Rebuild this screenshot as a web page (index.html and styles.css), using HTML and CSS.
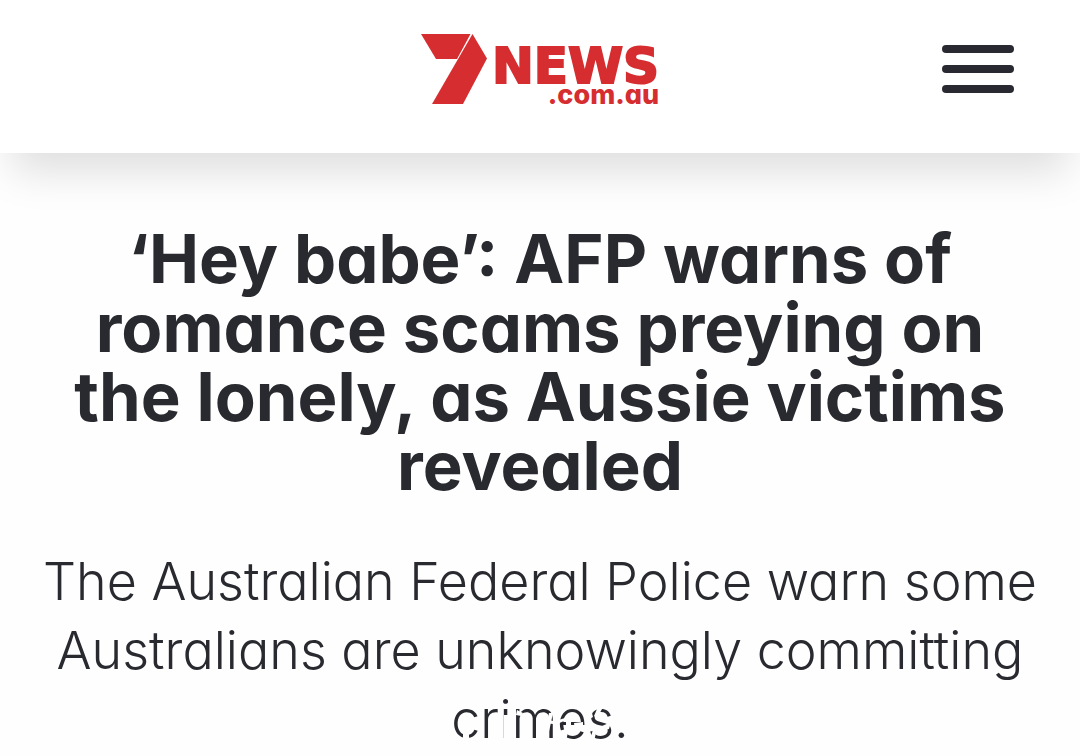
FILE: index.html
```html
<!DOCTYPE html>
<html lang="en-AU">
<head>
<meta charset="utf-8">
<meta name="viewport" content="width=device-width, initial-scale=1">
<title>7NEWS.com.au</title>
<link rel="stylesheet" href="styles.css">
</head>
<body>
<header class="site-header">
  <a class="brand" href="#" aria-label="7NEWS.com.au home">
    <svg class="brand-mark" viewBox="0 0 67 71" aria-hidden="true">
      <path d="M0 0H49.500L36 25H15Z"/>
      <path d="M51.500 0L66 24.500L42 70H11Z"/>
    </svg>
    <span class="brand-text">
      <span class="brand-name">NEWS</span>
      <span class="brand-domain">.com.au</span>
    </span>
  </a>
  <button class="menu-button" type="button" aria-label="Open menu">
    <span class="menu-bar"></span>
    <span class="menu-bar"></span>
    <span class="menu-bar"></span>
  </button>
</header>
<main class="article">
  <h1 class="headline">‘Hey babe’: AFP warns of romance scams preying on the lonely, as Aussie victims revealed</h1>
  <p class="deck">The Australian Federal Police warn some Australians are unknowingly committing <span class="last-word">crimes.<svg class="cutouts" viewBox="0 0 180 50" aria-hidden="true">
    <path d="M16 30H22V43H16Z"/>
    <path d="M57 17H62V43H57Z"/>
    <path d="M70 12L76 15L74 18L69 17Z"/>
    <path d="M89 20H95V43H89Z"/>
    <path d="M102 15L106 15L100 43H97Z"/>
    <path d="M98 21L106 23V26L98 25Z"/>
    <path d="M108 23L118 20L117 23L108 27Z"/>
    <path d="M119 22H124V30H119Z"/>
    <path d="M112 33L122 30L119 43H112Z"/>
    <path d="M127 25L136 24V32L128 35Z"/>
    <path d="M138 18L145 15L146 19L141 22Z"/>
    <path d="M146 31L150 31L147 43H143Z"/>
    <path d="M150 11L155 11L150 20L147 18Z"/>
    <path d="M155 28L164 24L162 31L158 32Z"/>
  </svg></span></p>
</main>
</body>
</html>
```
FILE: styles.css
```css
* { box-sizing: border-box; }
body {
  margin: 0;
  background: #fefefe;
  color: #292a2f;
  font-family: Inter, "Liberation Sans", sans-serif;
  font-feature-settings: "cv11";
}
.site-header {
  display: grid;
  grid-template-columns: 1fr auto 1fr;
  align-items: start;
  padding: 34px 66px 48px;
  background: #fff;
  box-shadow: 0 30px 40px -12px rgba(0, 0, 0, 0.13);
}
.brand {
  grid-column: 2;
  display: flex;
  gap: 4px;
  color: #d62d30;
  text-decoration: none;
}
.brand-mark { width: 67px; height: 71px; fill: currentColor; }
.brand-text {
  display: flex;
  flex-direction: column;
  align-items: flex-end;
  padding-top: 14px;
}
.brand-name {
  font-family: "DejaVu Sans", sans-serif;
  font-size: 50px;
  font-weight: 700;
  line-height: 36px;
  -webkit-text-stroke: 2px currentColor;
}
.brand-domain { font-size: 27px; font-weight: 800; line-height: 21px; }
.menu-button {
  display: flex;
  flex-direction: column;
  gap: 12px;
  justify-self: end;
  margin-top: 11px;
  padding: 0;
  border: 0;
  background: none;
}
.menu-bar { width: 72px; height: 8px; border-radius: 4px; background: #292a31; }
.article { padding: 71px 40px 0; text-align: center; }
.headline {
  margin: 0 0 47px;
  font-size: 67px;
  font-weight: 700;
  line-height: 69px;
}
.deck {
  margin: 0;
  font-size: 52px;
  font-weight: 300;
  line-height: 69px;
}
.last-word { position: relative; }
.cutouts {
  position: absolute;
  bottom: 3px;
  left: -4px;
  width: 180px;
  height: 50px;
  fill: #fefefe;
}
```
